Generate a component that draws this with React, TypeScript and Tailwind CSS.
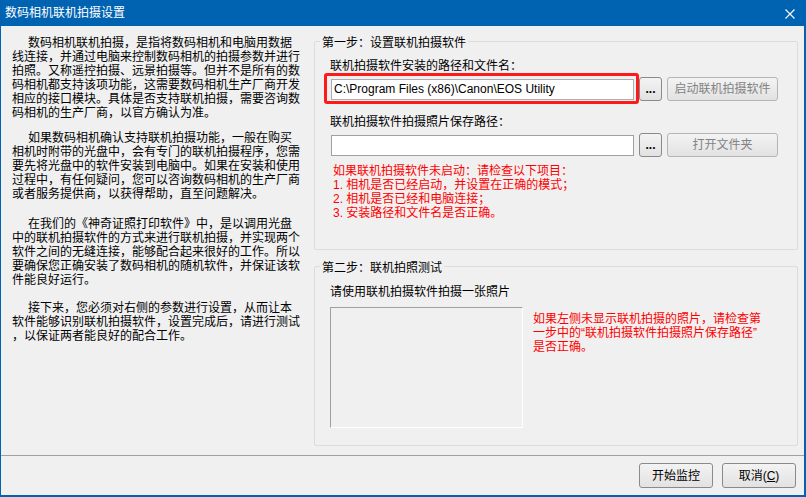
import clsx from "clsx";

const intro = [
  [
    "数码相机联机拍摄，是指将数码相机和电脑用数据",
    "线连接，并通过电脑来控制数码相机的拍摄参数并进行",
    "拍照。又称遥控拍摄、远景拍摄等。但并不是所有的数",
    "码相机都支持该项功能，这需要数码相机生产厂商开发",
    "相应的接口模块。具体是否支持联机拍摄，需要咨询数",
    "码相机的生产厂商，以官方确认为准。",
  ],
  [
    "如果数码相机确认支持联机拍摄功能，一般在购买",
    "相机时附带的光盘中，会有专门的联机拍摄程序，您需",
    "要先将光盘中的软件安装到电脑中。如果在安装和使用",
    "过程中，有任何疑问，您可以咨询数码相机的生产厂商",
    "或者服务提供商，以获得帮助，直至问题解决。",
  ],
  [
    "在我们的《神奇证照打印软件》中，是以调用光盘",
    "中的联机拍摄软件的方式来进行联机拍摄，并实现两个",
    "软件之间的无缝连接，能够配合起来很好的工作。所以",
    "要确保您正确安装了数码相机的随机软件，并保证该软",
    "件能良好运行。",
  ],
  [
    "接下来，您必须对右侧的参数进行设置，从而让本",
    "软件能够识别联机拍摄软件，设置完成后，请进行测试",
    "，以保证两者能良好的配合工作。",
  ],
];

const paraGaps = ["", "mt-[11px]", "mt-[16px]", "mt-[14px]"];

const checks = [
  "如果联机拍摄软件未启动：请检查以下项目：",
  "1. 相机是否已经启动，并设置在正确的模式；",
  "2. 相机是否已经和电脑连接；",
  "3. 安装路径和文件名是否正确。",
];

const photoHint = [
  "如果左侧未显示联机拍摄的照片，请检查第",
  "一步中的\u201C联机拍摄软件拍摄照片保存路径\u201D",
  "是否正确。",
];

function WinButton({
  children,
  className,
  disabled,
}: {
  children: React.ReactNode;
  className?: string;
  disabled?: boolean;
}) {
  return (
    <button
      className={clsx(
        "flex items-center justify-center rounded-[3px] border bg-linear-to-b from-[#F3F3F3] to-[#E2E2E2] text-[12px] leading-[14px]",
        disabled ? "border-[#B5B5B5] text-[#838383]" : "border-[#8A8A8A] text-black",
        className
      )}
    >
      {children}
    </button>
  );
}

function GroupBox({
  title,
  className,
  children,
}: {
  title: string;
  className?: string;
  children: React.ReactNode;
}) {
  return (
    <fieldset className={clsx("rounded-[2px] border border-[#DCDCDC]", className)}>
      <legend className="ml-[5px] px-[2px] pt-[4px] text-[12px] leading-[14px] text-black">
        {title}
      </legend>
      <div className="pl-[15px]">{children}</div>
    </fieldset>
  );
}

export default function App() {
  return (
    <div className="flex h-[497px] w-[806px] flex-col bg-[#0063B1] font-['Liberation_Sans','Noto_Sans_CJK_SC',sans-serif]">
      {/* title bar */}
      <div className="flex h-[26px] shrink-0 items-center justify-between pl-[5px] pr-[11px]">
        <span className="text-[12px] leading-[14px] text-white">数码相机联机拍摄设置</span>
        <svg width="10" height="10" viewBox="0 0 10 10" className="mt-[1px]">
          <path d="M0.5 0.5 L9.5 9.5 M9.5 0.5 L0.5 9.5" stroke="#FFFFFF" strokeWidth="1.1" />
        </svg>
      </div>

      <div className="mb-[2px] ml-[1px] mr-[2px] flex flex-1 flex-col bg-[#F0F0F0]">
        <div className="flex h-[429px] shrink-0">
          {/* left help text */}
          <div className="w-[313px] shrink-0 pl-[11px] pt-[10px] text-[12px] leading-[14px] text-black">
            {intro.map((lines, i) => (
              <div key={i} className={paraGaps[i]}>
                {lines.map((line, j) => (
                  <div key={j} className={clsx("whitespace-nowrap", j === 0 && "pl-[16px]")}>
                    {line}
                  </div>
                ))}
              </div>
            ))}
          </div>

          {/* right settings */}
          <div className="w-[484px] shrink-0 pt-[6px]">
            <GroupBox title="第一步：设置联机拍摄软件" className="h-[218px]">
              <div className="mt-[9px] text-[12px] leading-[14px] text-black">
                联机拍摄软件安装的路径和文件名：
              </div>
              <div className="mt-[4px] flex h-[24px] items-center">
                <div className="relative ml-[1px]">
                  <input
                    readOnly
                    value="C:\Program Files (x86)\Canon\EOS Utility"
                    className="block h-[21px] w-[303px] border border-[#ABADB3] bg-white px-[2px] text-[12px] text-black outline-none"
                  />
                  <div className="pointer-events-none absolute -bottom-[4px] -left-[7px] -right-[5px] -top-[6px] rounded-[3px] border-[3px] border-[#FF1A1A]" />
                </div>
                <WinButton className="ml-[5px] h-[24px] w-[23px] font-bold">...</WinButton>
                <WinButton disabled className="ml-[5px] h-[24px] w-[111px]">
                  启动联机拍摄软件
                </WinButton>
              </div>

              <div className="mt-[14px] text-[12px] leading-[14px] text-black">
                联机拍摄软件拍摄照片保存路径：
              </div>
              <div className="mt-[4px] flex h-[24px] items-center">
                <input
                  readOnly
                  value=""
                  className="ml-[1px] block h-[21px] w-[303px] border border-[#A0A0A0] bg-white px-[2px] text-[12px] outline-none"
                />
                <WinButton className="ml-[5px] h-[24px] w-[23px] font-bold">...</WinButton>
                <WinButton disabled className="ml-[5px] h-[24px] w-[111px]">
                  打开文件夹
                </WinButton>
              </div>

              <div className="mt-[7px] pl-[3px] text-[12px] leading-[14px] text-[#FF0000]">
                {checks.map((line) => (
                  <div key={line} className="whitespace-nowrap">
                    {line}
                  </div>
                ))}
              </div>
            </GroupBox>

            <GroupBox title="第二步：联机拍照测试" className="mt-[7px] h-[189px]">
              <div className="mt-[10px] text-[12px] leading-[14px] text-black">
                请使用联机拍摄软件拍摄一张照片
              </div>
              <div className="mt-[8px] flex">
                <div className="h-[121px] w-[193px] shrink-0 border border-b-white border-l-[#A0A0A0] border-r-white border-t-[#A0A0A0]" />
                <div className="ml-[10px] mt-[5px] text-[12px] leading-[14px] text-[#FF0000]">
                  {photoHint.map((line) => (
                    <div key={line} className="whitespace-nowrap">
                      {line}
                    </div>
                  ))}
                </div>
              </div>
            </GroupBox>
          </div>
        </div>

        {/* footer */}
        <div className="flex flex-1 justify-end gap-[9px] border-t border-[#A0A0A0] pr-[8px] pt-[7px]">
          <WinButton className="h-[25px] w-[74px]">开始监控</WinButton>
          <WinButton className="h-[25px] w-[74px]">
            取消(<span className="underline">C</span>)
          </WinButton>
        </div>
      </div>
    </div>
  );
}
